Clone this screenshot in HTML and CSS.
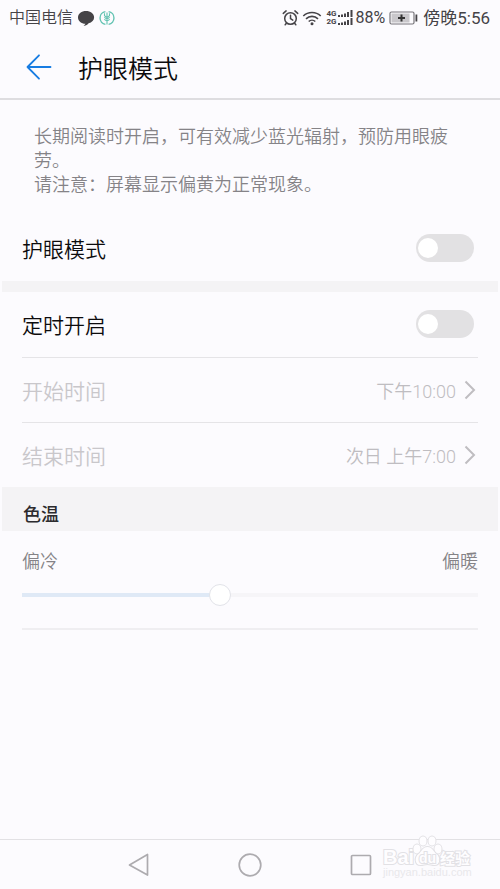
FILE: index.html
```
<!DOCTYPE html>
<html lang="zh-CN">
<head>
<meta charset="utf-8">
<meta name="viewport" content="width=device-width, initial-scale=1">
<title>护眼模式</title>
<link rel="stylesheet" href="styles.css">
</head>
<body>
<div class="screen">
  <div class="status">
    <div class="status-group">
      <span class="carrier">中国电信</span>
      <svg class="bubble" width="18" height="18" viewBox="0 0 18 18" aria-hidden="true"><path fill="#454347" d="M9 2C4.600 2 1 4.700 1 8.400c0 3.600 3.400 6.200 7.400 6.300-.4 1-1.400 1.700-2.400 1.900 2.400.4 4.500-.6 5.600-2.300 3.300-.9 5.500-3.200 5.500-5.900C17.100 4.700 13.400 2 9 2z"/></svg>
      <svg width="16" height="16" viewBox="0 0 16 16" fill="none" stroke="#63c3b2" aria-hidden="true"><path stroke-width="1.400" d="M6.400 1.600a6.500 6.500 0 0 0 0 12.800M9.600 1.600a6.500 6.500 0 0 1 0 12.800"/><path stroke-width="1.100" d="M8 2.500v12M5.500 3.200v2.600L8 7.500l2.500-1.700V3.200M5.300 7.400L8 9.200l2.700-1.800M5.300 9.400L8 11.200l2.700-1.800"/></svg>
    </div>
    <div class="status-group">
      <svg width="17" height="18" viewBox="0 0 17 18" fill="none" stroke="#454347" stroke-width="1.500" stroke-linecap="round" aria-hidden="true"><circle cx="8.500" cy="9.500" r="5.800"/><path d="M8.500 6.300v3.400l2.300 1.500M1.300 4.400l2.800-2.500M15.700 4.400l-2.800-2.500M4.200 14.500l-1 1.300M12.800 14.500l1 1.300"/></svg>
      <svg class="wifi" width="20" height="16" viewBox="0 0 20 16" fill="none" stroke="#454347" stroke-width="1.600" aria-hidden="true"><path d="M1.300 6a12.500 12.500 0 0 1 17.400 0M4 8.800a8.700 8.700 0 0 1 12 0M6.700 11.500a4.800 4.800 0 0 1 6.600 0"/><circle cx="10" cy="13.800" r="1.500" fill="#454347" stroke="none"/></svg>
      <span class="net"><span>4G</span><span>2G</span></span>
      <svg width="17" height="18" viewBox="0 0 17 18" fill="#454347" aria-hidden="true"><path d="M1 6h2v2H1zM4 5.500h2V8H4zM7 4.500h2V8H7zM10 3h2v5h-2zM13.500 1h2v7h-2zM1 14h2v2H1zM4 13.500h2V16H4zM7 12.500h2V16H7zM10 11h2v5h-2zM13.500 9h2v7h-2z"/></svg>
      <span class="percent">88%</span>
      <svg class="battery" width="29" height="14" viewBox="0 0 29 14" aria-hidden="true"><rect x="1" y="1" width="24" height="12" rx="1.500" fill="#fcfbfe" stroke="#77757a" stroke-width="1.200"/><path fill="#c9c7cb" d="M2.500 2.500h18v9h-18z"/><path stroke="#333" stroke-width="2" d="M9 7h7M12.500 3.500v7"/><path fill="#454347" d="M26.500 3.500h1.800v7h-1.800z"/></svg>
      <span class="clock">傍晚5:56</span>
    </div>
  </div>

  <header class="header">
    <button class="back" type="button" aria-label="返回"><svg width="26" height="26" viewBox="0 0 26 26" fill="none" stroke="#177ce2" stroke-width="1.800" stroke-linecap="round" stroke-linejoin="round"><path d="M24.500 13H1.500M13 1.300L1.500 13 13 24.700"/></svg></button>
    <h1>护眼模式</h1>
  </header>

  <main>
    <p class="description">长期阅读时开启，可有效减少蓝光辐射，预防用眼疲劳。<br>请注意：屏幕显示偏黄为正常现象。</p>
    <label class="row"><span>护眼模式</span><input class="switch" type="checkbox" role="switch"></label>
    <div class="band"></div>
    <label class="row"><span>定时开启</span><input class="switch" type="checkbox" role="switch"></label>
    <button class="row entry" type="button" disabled><span>开始时间</span><span class="value">下午10:00<svg width="12" height="20" viewBox="0 0 12 20" fill="none" stroke="#bfbdc1" stroke-width="2"><path d="M1.500 1.500L10 10l-8.500 8.500"/></svg></span></button>
    <button class="row entry" type="button" disabled><span>结束时间</span><span class="value">次日 上午7:00<svg width="12" height="20" viewBox="0 0 12 20" fill="none" stroke="#bfbdc1" stroke-width="2"><path d="M1.500 1.500L10 10l-8.500 8.500"/></svg></span></button>
    <h2 class="section" id="temp">色温</h2>
    <div class="temperature">
      <div class="ends"><span>偏冷</span><span>偏暖</span></div>
      <input class="slider" type="range" min="0" max="100" value="43" aria-labelledby="temp">
    </div>
  </main>

  <nav class="nav">
    <button type="button" aria-label="返回"><svg width="24" height="24" viewBox="0 0 24 24"><path d="M20.500 1.500v20.600L2.500 12z"/></svg></button>
    <button type="button" aria-label="主屏幕"><svg width="24" height="24" viewBox="0 0 24 24"><circle cx="12" cy="12" r="10.800"/></svg></button>
    <button type="button" aria-label="最近任务"><svg width="24" height="24" viewBox="0 0 24 24"><rect x="2.500" y="2.500" width="19" height="19" rx="1"/></svg></button>
    <svg class="watermark" width="96" height="56" viewBox="0 0 96 56" aria-hidden="true">
      <g class="outline">
        <text class="brand" x="5" y="35">Bai</text>
        <ellipse cx="39" cy="20" rx="3.500" ry="4.500"/><ellipse cx="45" cy="12" rx="3.500" ry="4.500"/><ellipse cx="54" cy="12" rx="3.500" ry="4.500"/><ellipse cx="60" cy="20" rx="3.500" ry="4.500"/>
        <path d="M49.500 18c-5 0-6 5-9 7-4 3-4 11 2 11 3 0 4-1 7-1s4 1 7 1c6 0 6-8 2-11-3-2-4-7-9-7z"/>
        <text class="du" x="41" y="34">du</text>
        <text class="exp" x="62" y="35">经验</text>
      </g>
      <text class="site" x="5" y="47">jingyan.baidu.com</text>
    </svg>
  </nav>
</div>
</body>
</html>
```
FILE: styles.css
```
* {
  box-sizing: border-box;
}

body {
  margin: 0;
  background: #fcfbfe;
  color: #0c0b0d;
  font-family: Roboto, "Noto Sans CJK SC", sans-serif;
  font-weight: 350;
}

button {
  padding: 0;
  border: 0;
  background: none;
  font: inherit;
  color: inherit;
}

svg {
  display: block;
  flex: none;
}

.screen {
  display: flex;
  flex-direction: column;
  min-height: 100vh;
}

.status {
  display: flex;
  justify-content: space-between;
  align-items: center;
  height: 35px;
  padding: 0 10px 0 9px;
  color: #454347;
  font-size: 17px;
  line-height: 24px;
  white-space: nowrap;
}

.status-group {
  display: flex;
  align-items: center;
}

.carrier {
  font-size: 16px;
  margin-right: 4px;
}

.bubble {
  margin-right: 4px;
}

.wifi {
  margin: 0 4px 0 3px;
}

.net {
  display: flex;
  flex-direction: column;
  font-size: 8px;
  line-height: 8px;
  font-weight: 700;
}

.percent,
.clock {
  font-weight: 400;
}

.percent {
  margin: 0 4px 0 2px;
  font-size: 16px;
}

.battery {
  margin-right: 5px;
}

.header {
  display: flex;
  align-items: center;
  gap: 26px;
  height: 65px;
  padding: 0 26px;
  border-bottom: 2px solid #dedde0;
}

h1 {
  margin: 0;
  padding-top: 6px;
  font-size: 25px;
  line-height: 36px;
  font-weight: 350;
}

main {
  flex: 1;
}

.description {
  margin: 0;
  padding: 25px 34px 19px;
  color: #858387;
  font-size: 18px;
  line-height: 24px;
}

.row {
  display: flex;
  justify-content: space-between;
  align-items: center;
  height: 65px;
  margin: 0 22px;
  padding: 0 4px 1px 0;
  font-size: 21px;
}

.band {
  height: 11px;
  margin: 0 2px;
  background: #f4f3f5;
}

.switch {
  appearance: none;
  display: flex;
  align-items: center;
  width: 58px;
  height: 28px;
  margin: 0;
  padding: 0 2px;
  border-radius: 14px;
  background: #e2e1e3;
}

.switch::before {
  content: "";
  width: 20px;
  height: 20px;
  border-radius: 50%;
  background: #fff;
}

.switch:checked {
  background: #177ce2;
}

.switch:checked::before {
  margin-left: auto;
}

.entry {
  width: calc(100% - 44px);
  padding-right: 2px;
  border-top: 1px solid #e5e4e7;
  color: #c9c7cb;
}

.value {
  display: flex;
  align-items: center;
  gap: 8px;
  color: #bfbdc1;
  font-size: 18px;
}

.section {
  margin: 0 2px;
  padding: 14px 21px 2px;
  background: #f4f3f5;
  color: #2c2b2e;
  font-size: 18px;
  line-height: 28px;
  font-weight: 500;
}

.temperature {
  margin: 0 22px;
  padding: 17px 0 22px;
  border-bottom: 2px solid #efeef1;
}

.ends {
  display: flex;
  justify-content: space-between;
  margin-bottom: 8px;
  color: #858387;
  font-size: 18px;
  line-height: 28px;
}

.slider {
  appearance: none;
  display: block;
  width: 100%;
  height: 22px;
  margin: 0;
  background: linear-gradient(#dfe9f6, #dfe9f6) 0 50% / 43% 4px no-repeat,
    linear-gradient(#f6f5f8, #f6f5f8) 0 50% / 100% 4px no-repeat;
}

.slider::-webkit-slider-thumb {
  appearance: none;
  width: 22px;
  height: 22px;
  border: 1px solid #e2e3e9;
  border-radius: 50%;
  background: #fff;
}

.nav {
  position: relative;
  display: flex;
  justify-content: center;
  align-items: center;
  gap: 87px;
  height: 50px;
  border-top: 1px solid #e2e1e4;
}

.nav button svg {
  fill: none;
  stroke: #adabaf;
  stroke-width: 1.7px;
  stroke-linejoin: round;
}

.watermark {
  position: absolute;
  right: 26px;
  bottom: 4px;
}

.outline {
  fill: #fefdff;
  stroke: #e2e1e5;
  stroke-width: 2px;
  paint-order: stroke;
}

.brand {
  font: 700 20px "Liberation Sans", sans-serif;
}

.du {
  font: 700 14px "Liberation Sans", sans-serif;
}

.exp {
  font: 700 15px "Noto Sans CJK SC", sans-serif;
}

.site {
  fill: #e9e8eb;
  font: 400 11px "Liberation Sans", sans-serif;
}
```
